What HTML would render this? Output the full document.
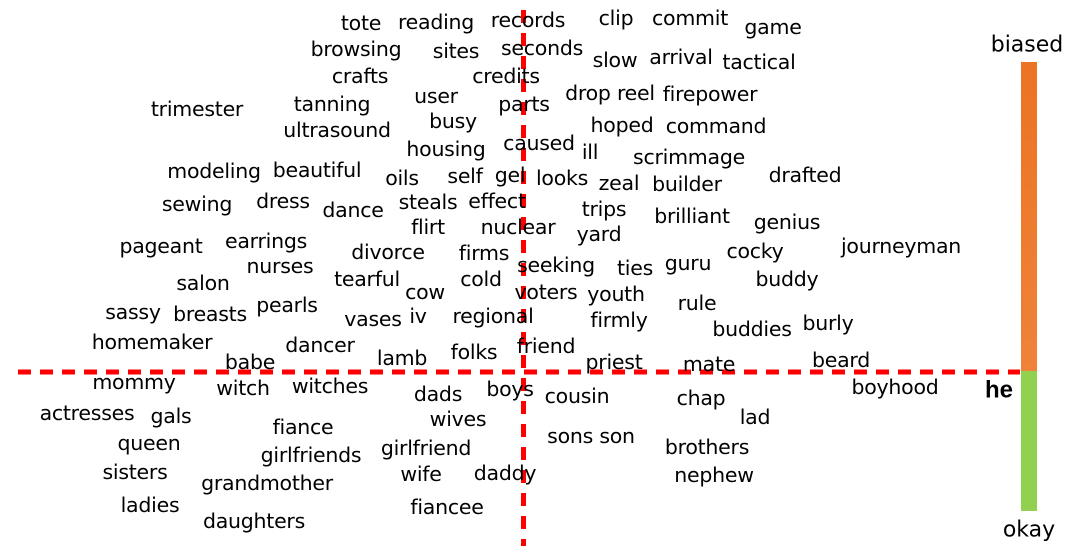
<!DOCTYPE html>
<html><head><meta charset="utf-8"><style>
html,body{margin:0;padding:0;background:#fff;width:1071px;height:554px;overflow:hidden}
svg{display:block}
text{font-family:"DejaVu Sans","Liberation Sans",sans-serif;font-size:20.5px;letter-spacing:-0.25px;fill:#000;dominant-baseline:central;text-anchor:middle}
</style></head><body>
<svg width="1071" height="554" viewBox="0 0 1071 554">
<line x1="18" y1="372" x2="1020" y2="372" stroke="#f00" stroke-width="5" stroke-dasharray="13 9"/>
<line x1="523.5" y1="10" x2="523.5" y2="546" stroke="#f00" stroke-width="5" stroke-dasharray="13 10"/>
<defs><linearGradient id="g" x1="0" y1="0" x2="0" y2="1"><stop offset="0" stop-color="#ec7324"/><stop offset="1" stop-color="#ef8339"/></linearGradient></defs>
<rect x="1021" y="62" width="16" height="309" fill="url(#g)"/>
<rect x="1021" y="371" width="16" height="140" fill="#92d050"/>
<text x="1027" y="45" style="font-size:22px;letter-spacing:0">biased</text>
<text x="1029" y="530" style="font-size:22px;letter-spacing:0">okay</text>
<text x="999" y="390" style="font-family:'Liberation Sans',sans-serif;font-weight:bold;font-size:24px;letter-spacing:0">he</text>
<g>
<text x="361" y="23">tote</text><text x="436" y="22">reading</text><text x="528" y="20">records</text><text x="616" y="18">clip</text><text x="690" y="18">commit</text><text x="773" y="27">game</text>
<text x="356" y="49">browsing</text><text x="456" y="51">sites</text><text x="542" y="48">seconds</text><text x="615" y="60">slow</text><text x="681" y="57">arrival</text><text x="759" y="62">tactical</text>
<text x="360" y="76">crafts</text><text x="506" y="76">credits</text><text x="610" y="93">drop reel</text><text x="710" y="94">firepower</text>
<text x="197" y="109">trimester</text><text x="332" y="104">tanning</text><text x="436" y="96">user</text><text x="524" y="104">parts</text>
<text x="337" y="130">ultrasound</text><text x="453" y="121">busy</text><text x="622" y="125">hoped</text><text x="716" y="126">command</text>
<text x="446" y="149">housing</text><text x="539" y="143">caused</text><text x="590" y="152">ill</text><text x="689" y="157">scrimmage</text>
<text x="214" y="171">modeling</text><text x="317" y="170">beautiful</text><text x="402" y="178">oils</text><text x="465" y="176">self</text><text x="510" y="175">gel</text><text x="562" y="178">looks</text><text x="619" y="183">zeal</text><text x="687" y="184">builder</text><text x="805" y="175">drafted</text>
<text x="197" y="204">sewing</text><text x="283" y="201">dress</text><text x="353" y="210">dance</text><text x="428" y="202">steals</text><text x="497" y="201">effect</text><text x="604" y="209">trips</text><text x="692" y="216">brilliant</text><text x="787" y="222">genius</text>
<text x="428" y="227">flirt</text><text x="518" y="227">nuclear</text><text x="599" y="234">yard</text>
<text x="161" y="246">pageant</text><text x="266" y="241">earrings</text><text x="388" y="252">divorce</text><text x="484" y="253">firms</text><text x="755" y="251">cocky</text><text x="901" y="246">journeyman</text>
<text x="280" y="266">nurses</text><text x="556" y="265">seeking</text><text x="635" y="268">ties</text><text x="688" y="263">guru</text>
<text x="203" y="283">salon</text><text x="367" y="279">tearful</text><text x="481" y="279">cold</text><text x="787" y="279">buddy</text>
<text x="425" y="292">cow</text><text x="546" y="292">voters</text><text x="616" y="294">youth</text>
<text x="133" y="312">sassy</text><text x="210" y="314">breasts</text><text x="287" y="305">pearls</text><text x="697" y="303">rule</text><text x="828" y="323">burly</text>
<text x="373" y="319">vases</text><text x="418" y="316">iv</text><text x="493" y="316">regional</text><text x="619" y="320">firmly</text><text x="752" y="329">buddies</text>
<text x="152" y="342">homemaker</text><text x="320" y="345">dancer</text><text x="546" y="346">friend</text>
<text x="250" y="362">babe</text><text x="402" y="358">lamb</text><text x="474" y="352">folks</text><text x="614" y="362">priest</text><text x="709" y="364">mate</text><text x="841" y="360">beard</text>
<text x="134" y="382">mommy</text><text x="243" y="388">witch</text><text x="330" y="386">witches</text><text x="438" y="394">dads</text><text x="510" y="389">boys</text><text x="577" y="396">cousin</text><text x="701" y="398">chap</text><text x="895" y="387">boyhood</text>
<text x="87" y="413">actresses</text><text x="171" y="416">gals</text><text x="755" y="417">lad</text>
<text x="458" y="419">wives</text>
<text x="303" y="427">fiance</text><text x="149" y="443">queen</text><text x="591" y="436">sons son</text><text x="707" y="447">brothers</text>
<text x="311" y="455">girlfriends</text><text x="426" y="448">girlfriend</text>
<text x="135" y="472">sisters</text><text x="421" y="474">wife</text><text x="505" y="473">daddy</text><text x="714" y="475">nephew</text>
<text x="267" y="483">grandmother</text>
<text x="150" y="505">ladies</text><text x="447" y="507">fiancee</text>
<text x="254" y="521">daughters</text>
</g>
</svg>
</body></html>
